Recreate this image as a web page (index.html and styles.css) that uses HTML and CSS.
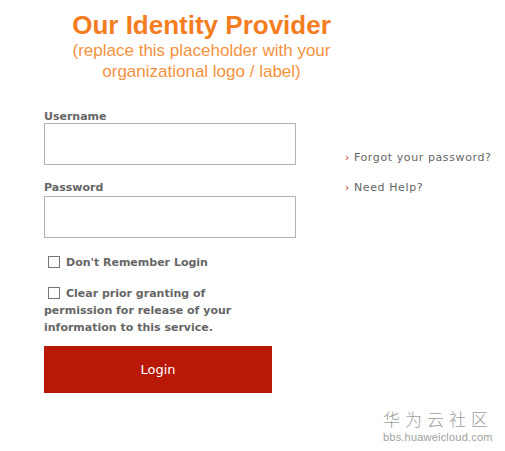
FILE: index.html
```html
<!DOCTYPE html>
<html>
<head>
<meta charset="utf-8">
<link rel="stylesheet" href="styles.css">
</head>
<body>
<div class="page">
  <header class="brand">
    <div class="brand-title">Our Identity Provider</div>
    <div class="brand-sub">(replace this placeholder with your<br>organizational logo / label)</div>
  </header>
  <main class="main">
    <form class="form">
      <label class="field-label" for="u">Username</label>
      <input class="field-input" id="u" type="text">
      <label class="field-label pw" for="p">Password</label>
      <input class="field-input" id="p" type="password">
      <div class="check check-first">
        <span class="box"></span><span class="check-text">Don't Remember Login</span>
      </div>
      <div class="check check-second">
        <span class="box"></span><span class="check-text">Clear prior granting of</span>
        <div class="check-more">permission for release of your<br>information to this service.</div>
      </div>
      <button class="login" type="button">Login</button>
    </form>
    <aside class="links">
      <a class="link"><span class="arrow">›</span>Forgot your password?</a>
      <a class="link"><span class="arrow">›</span>Need Help?</a>
    </aside>
  </main>
  <footer class="mark">
    <div class="mark-cn">华为云社区</div>
    <div class="mark-url">bbs.huaweicloud.com</div>
  </footer>
</div>
</body>
</html>
```
FILE: styles.css
```css
html, body {
  margin: 0;
  padding: 0;
  background: #fff;
}
.page {
  width: 505px;
  height: 451px;
  position: relative;
  font-family: "DejaVu Sans", Verdana, sans-serif;
}
.brand {
  margin-left: 44px;
  width: 315px;
  text-align: center;
  padding-top: 10px;
  font-family: "Liberation Sans", Arial, sans-serif;
  color: #f47d1f;
}
.brand-title {
  font-size: 26px;
  font-weight: bold;
  line-height: 30px;
}
.brand-sub {
  font-size: 17px;
  line-height: 21px;
  color: #f5923e;
}
.main {
  display: flex;
  padding-left: 44px;
  margin-top: 28px;
}
.form {
  width: 252px;
  display: flex;
  flex-direction: column;
  margin: 0;
}
.field-label {
  font-size: 11px;
  font-weight: bold;
  color: #666;
  line-height: 13px;
}
.field-label.pw {
  margin-top: 16px;
  margin-bottom: 2px;
}
.field-input {
  box-sizing: border-box;
  width: 252px;
  height: 42px;
  margin: 0;
  border: 1px solid #b3b3b3;
  background: #fff;
  outline: none;
}
.check {
  font-size: 11px;
  font-weight: bold;
  color: #666;
  line-height: 17px;
}
.check-first {
  margin-top: 16px;
}
.check-second {
  margin-top: 14px;
}
.box {
  display: inline-block;
  box-sizing: border-box;
  width: 12px;
  height: 12px;
  border: 1px solid #777;
  vertical-align: -2px;
  margin: 0 6px 0 4px;
}
.login {
  margin-top: 10px;
  width: 228px;
  height: 47px;
  border: none;
  background: #b71807;
  color: #fff;
  font-family: "DejaVu Sans", Verdana, sans-serif;
  font-size: 13px;
  padding: 0;
}
.links {
  margin-left: 49px;
  padding-top: 41px;
  display: flex;
  flex-direction: column;
  gap: 17px;
}
.link {
  font-size: 11px;
  line-height: 13px;
  color: #666;
  letter-spacing: 0.6px;
}
.arrow {
  color: #c0392b;
  margin-right: 4px;
}
.mark {
  position: absolute;
  left: 383px;
  top: 408px;
  color: #a0a0a0;
  font-family: "Liberation Sans", Arial, sans-serif;
}
.mark-cn {
  font-family: "Noto Sans CJK SC", sans-serif;
  font-size: 17px;
  font-weight: 300;
  line-height: 22px;
  letter-spacing: 5px;
}
.mark-url {
  font-size: 11px;
  line-height: 12px;
  letter-spacing: 0.2px;
  margin-top: 1px;
}
```
